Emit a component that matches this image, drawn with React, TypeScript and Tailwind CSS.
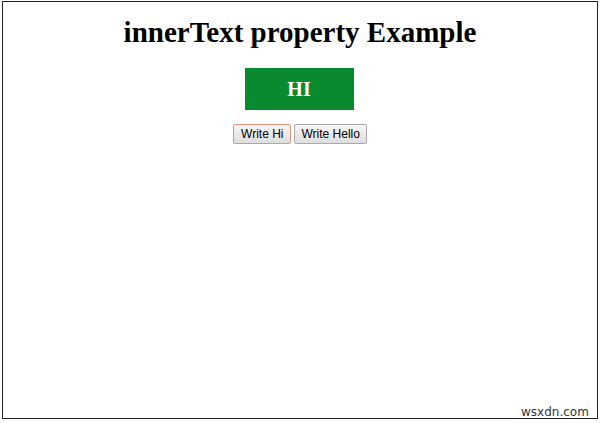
export default function App() {
  return (
    <div className="relative w-[600px] h-[423px] bg-white overflow-hidden">
      <div className="ml-[2px] mt-[1px] w-[596px] h-[418px] border border-[#222] flex flex-col items-center">
        <h1
          className="mt-[13px] text-[29px] font-bold leading-[34px] text-black"
          style={{ fontFamily: '"Liberation Serif", "Times New Roman", serif' }}
        >
          innerText property Example
        </h1>
        <div
          className="mt-[19px] mr-[2px] w-[109px] h-[42px] bg-[#0a8a2e] flex items-center justify-center text-white text-[20px] font-bold"
          style={{ fontFamily: '"Liberation Serif", "Times New Roman", serif' }}
        >
          HI
        </div>
        <div
          className="mt-[14px] flex gap-[3px] text-[12px] text-black"
          style={{ fontFamily: '"Liberation Sans", Arial, sans-serif' }}
        >
          <button className="h-[20px] px-[7px] rounded-[2px] border border-[#e0957a] bg-gradient-to-b from-[#f6f6f6] to-[#dedede]">
            Write Hi
          </button>
          <button className="h-[20px] px-[6px] rounded-[2px] border border-[#a9a9a9] bg-gradient-to-b from-[#f6f6f6] to-[#dedede]">
            Write Hello
          </button>
        </div>
      </div>
      <span
        className="absolute left-[521px] top-[403px] text-[12px] text-[#333]"
        style={{ fontFamily: '"DejaVu Sans", Verdana, sans-serif' }}
      >
        wsxdn.com
      </span>
    </div>
  );
}
